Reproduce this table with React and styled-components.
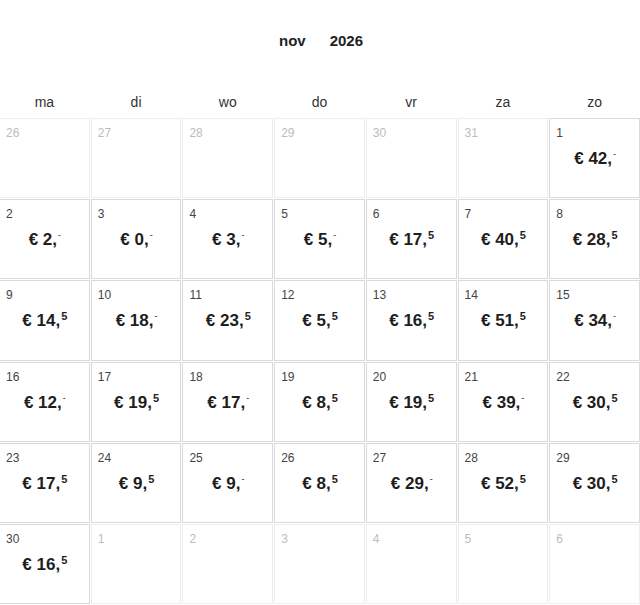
import React from 'react';
import styled, {createGlobalStyle} from 'styled-components';

const GlobalStyle = createGlobalStyle`
  html, body {
    margin: 0;
    padding: 0;
    background: #fff;
    font-family: "Liberation Sans", Arial, sans-serif;
    overflow: hidden;
  }
`;

const weekdays = ['ma', 'di', 'wo', 'do', 'vr', 'za', 'zo'];

// [day, price euros, cents-mark, inMonth]
const days = [
  [26, null, null, false], [27, null, null, false], [28, null, null, false],
  [29, null, null, false], [30, null, null, false], [31, null, null, false],
  [1, 42, '-', true],
  [2, 2, '-', true], [3, 0, '-', true], [4, 3, '-', true], [5, 5, '-', true],
  [6, 17, '5', true], [7, 40, '5', true], [8, 28, '5', true],
  [9, 14, '5', true], [10, 18, '-', true], [11, 23, '5', true], [12, 5, '5', true],
  [13, 16, '5', true], [14, 51, '5', true], [15, 34, '-', true],
  [16, 12, '-', true], [17, 19, '5', true], [18, 17, '-', true], [19, 8, '5', true],
  [20, 19, '5', true], [21, 39, '-', true], [22, 30, '5', true],
  [23, 17, '5', true], [24, 9, '5', true], [25, 9, '-', true], [26, 8, '5', true],
  [27, 29, '-', true], [28, 52, '5', true], [29, 30, '5', true],
  [30, 16, '5', true],
  [1, null, null, false], [2, null, null, false], [3, null, null, false],
  [4, null, null, false], [5, null, null, false], [6, null, null, false],
];

const App = () => {
  return <Page>
    <GlobalStyle/>
    <Title>
      <span>nov</span>
      <span>2026</span>
    </Title>
    <WeekRow>
      {weekdays.map(w => <WeekLabel key={w}>{w}</WeekLabel>)}
    </WeekRow>
    <Grid>
      {days.map(([day, euros, mark, inMonth], i) => (
        <Cell key={i} inMonth={inMonth}>
          <DayNum inMonth={inMonth}>{day}</DayNum>
          {euros !== null && <Price>
            € {euros},<Cents mark={mark}>{mark}</Cents>
          </Price>}
        </Cell>
      ))}
    </Grid>
  </Page>
};

const Page = styled.div`
  width: 640px;
  height: 605px;
`

const Title = styled.div`
  height: 80px;
  display: flex;
  justify-content: center;
  align-items: center;
  gap: 24px;
  font-size: 15px;
  font-weight: 700;
  color: #222;
  padding-left: 2px;
`

const WeekRow = styled.div`
  height: 38px;
  display: grid;
  grid-template-columns: repeat(7, 1fr);
  gap: 1px;
  margin-left: -1px;
  width: 641px;
  align-items: end;
  padding-bottom: 8px;
  box-sizing: border-box;
`

const WeekLabel = styled.div`
  text-align: center;
  font-size: 14px;
  line-height: 16px;
  color: #333;
`

const Grid = styled.div`
  display: grid;
  grid-template-columns: repeat(7, 1fr);
  grid-auto-rows: 80.2px;
  gap: 1px;
  margin-left: -1px;
  width: 641px;
`

const Cell = styled.div`
  border: 1px solid ${props => props.inMonth ? '#dadada' : '#eeeeee'};
  box-sizing: border-box;
  padding: 7px 0 0 6px;
  display: flex;
  flex-direction: column;
`

const DayNum = styled.div`
  font-size: 12px;
  line-height: 14px;
  color: ${props => props.inMonth ? '#444' : '#bcbcbc'};
`

const Price = styled.div`
  margin-top: 9px;
  padding-right: 5px;
  text-align: center;
  font-size: 17px;
  line-height: 20px;
  font-weight: 700;
  color: #1e1e1e;
  white-space: nowrap;
`

const Cents = styled.sup`
  font-size: ${props => props.mark === '-' ? '9px' : '11px'};
  font-weight: ${props => props.mark === '-' ? 400 : 600};
  vertical-align: top;
  position: relative;
  top: -1px;
  line-height: 12px;
  margin-left: 1px;
`

export default App;
